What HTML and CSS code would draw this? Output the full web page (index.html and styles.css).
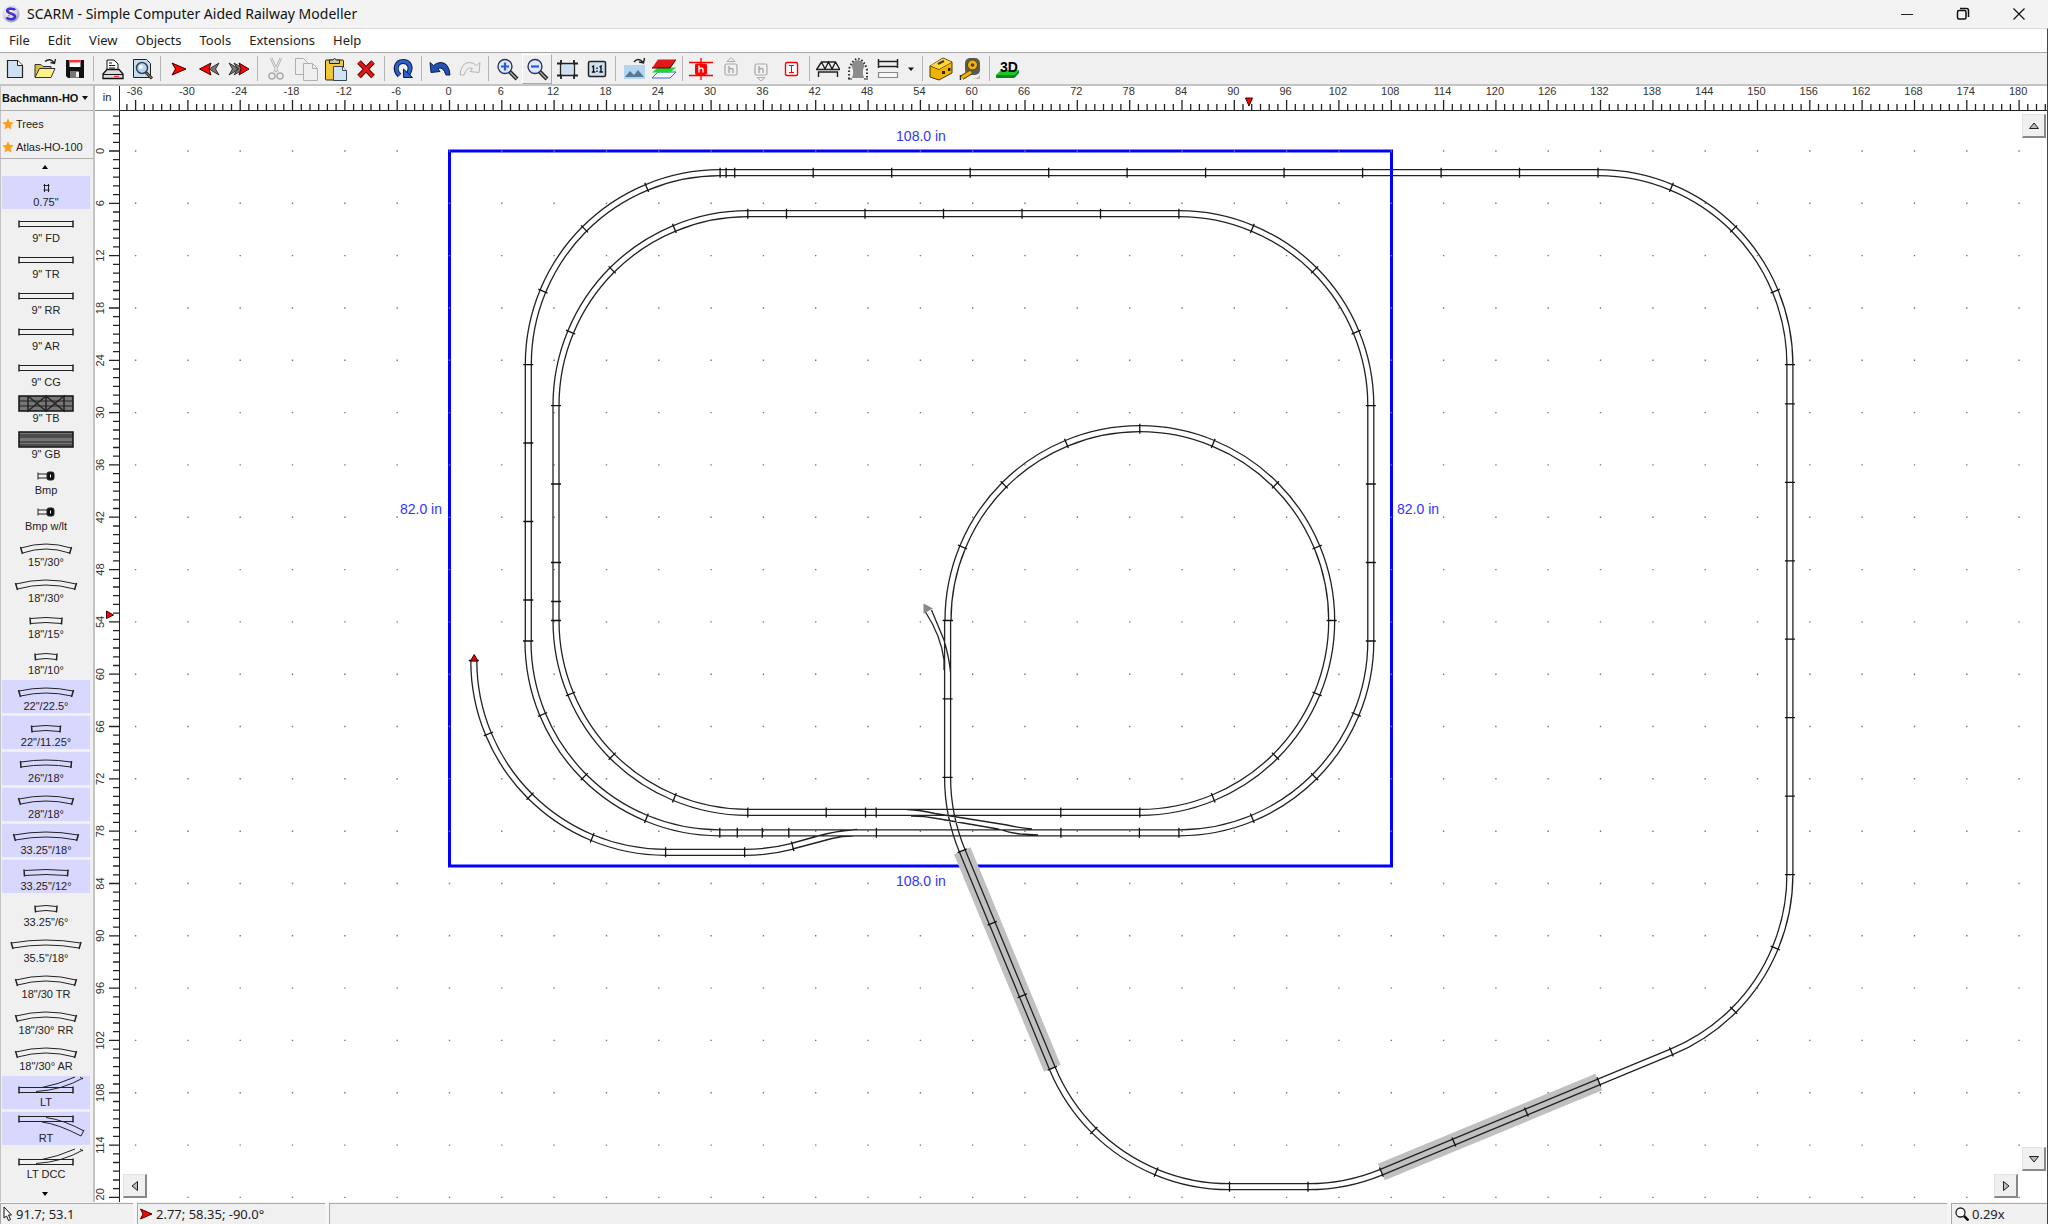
FILE: index.html
```html
<!DOCTYPE html>
<html lang="en">
<head>
<meta charset="utf-8">
<title>SCARM - Simple Computer Aided Railway Modeller</title>
<link rel="stylesheet" href="styles.css">
</head>
<body>
<header class="titlebar">
  <svg class="logo" width="18" height="18" viewBox="0 0 18 18"><defs><radialGradient id="ball" cx=".4" cy=".35" r=".7"><stop offset="0" stop-color="#fff"/><stop offset=".6" stop-color="#d5d5ea"/><stop offset="1" stop-color="#8f90ac"/></radialGradient></defs><circle cx="9" cy="9" r="8.5" fill="url(#ball)"/><path d="M13 5.2C12 3.4 6 2.8 5.2 5.6 4.600 9 13 7.800 13 11.600 12.800 15 6 15 4.800 12.300" fill="none" stroke="#3b32d8" stroke-width="2.600"/><path d="M8 7.500l3 1.300" stroke="#e03050" stroke-width="1"/><path d="M6 10.500l2 .5" stroke="#30c060" stroke-width="1"/></svg>
  <h1 class="title">SCARM - Simple Computer Aided Railway Modeller</h1>
  <div class="winbuttons">
    <button class="winbtn" aria-label="Minimize"><svg width="14" height="14"><path d="M1 7.500h12" stroke="#222" fill="none"/></svg></button>
    <button class="winbtn" aria-label="Restore"><svg width="14" height="14"><rect x="1.500" y="3.500" width="8.500" height="8.500" rx="1.500" fill="none" stroke="#111" stroke-width="1.500"/><path d="M4 1.500h6.500q2 0 2 2v6.500" fill="none" stroke="#111" stroke-width="1.500"/></svg></button>
    <button class="winbtn" aria-label="Close"><svg width="14" height="14"><path d="M1.500 1.500l11 11M12.500 1.500l-11 11" stroke="#111" stroke-width="1.200"/></svg></button>
  </div>
</header>
<div class="frame">
<nav class="menubar">
  <button>File</button><button>Edit</button><button>View</button><button>Objects</button><button>Tools</button><button>Extensions</button><button>Help</button>
</nav>
<div class="toolbar" role="toolbar">
  <button class="tool" aria-label="New"><svg viewBox="0 0 24 24"><path d="M4.500 3.500h10l5 5v12h-15z" fill="#cfe0f5" stroke="#222" stroke-width="1.200"/><path d="M14.500 3.500v5h5" fill="#fff" stroke="#222"/></svg></button>
  <button class="tool" aria-label="Open"><svg viewBox="0 0 24 24"><path d="M2 20V7.500h6l2 2h8v2" fill="#d8c22a" stroke="#333"/><path d="M2 20.500L6.500 11.500H22L18 20.500z" fill="#fbf08a" stroke="#333"/><path d="M12 4.500q5-4 9 1M22.500 2l-1 4.500-4-1" fill="none" stroke="#222" stroke-width="1.300"/></svg></button>
  <button class="tool" aria-label="Save"><svg viewBox="0 0 24 24"><path d="M3 3h18v18H5l-2-2z" fill="#111"/><path d="M6.500 3h11v7h-11z" fill="#fff"/><path d="M6.500 3h11v2.500h-11z" fill="#f33"/><path d="M7 14h9v7H7z" fill="#777"/><path d="M13 15h3v5h-3z" fill="#eee"/></svg></button>
  <span class="sep"></span>
  <button class="tool" aria-label="Print"><svg viewBox="0 0 24 24"><path d="M7 13V3h7l4 4v6" fill="#fff" stroke="#111"/><path d="M9 6h3M9 8.500h6M9 11h6" stroke="#111"/><path d="M3 17l4-4.500h12l4 4.500v4.500H3z" fill="#ddd" stroke="#111" stroke-width="1.300"/><path d="M3 17.500h20" stroke="#111"/><path d="M14 19.500h5" stroke="#e33" stroke-width="1.300"/></svg></button>
  <button class="tool" aria-label="Print preview"><svg viewBox="0 0 24 24"><path d="M3.500 2.500h13l4 4v14h-17z" fill="#cbdcf0" stroke="#222"/><circle cx="12" cy="11" r="5.500" fill="#b9d3f5" stroke="#345" stroke-width="1.500"/><circle cx="11" cy="10" r="2" fill="#fff"/><path d="M16 15.500l6 6" stroke="#222" stroke-width="3"/><path d="M16.500 16l5 5" stroke="#d8b040" stroke-width="1"/></svg></button>
  <span class="sep"></span>
  <button class="tool" aria-label="Start point"><svg viewBox="0 0 24 24"><path d="M5 6L19 12 5 18 8.500 12z" fill="#f00" stroke="#400"/></svg></button>
  <button class="tool" aria-label="Previous"><svg viewBox="0 0 24 24"><path d="M22 6L12 12 22 18 18.500 12z" fill="#777" stroke="#333"/><path d="M14 6L2.500 12 14 18 12 12z" fill="#f00" stroke="#400"/></svg></button>
  <button class="tool" aria-label="Next"><svg viewBox="0 0 24 24"><path d="M2 6l10 6-10 6 3.500-6zM7 6l10 6-10 6 3.500-6z" fill="#777" stroke="#333"/><path d="M12 6l10 6-10 6 2-6z" fill="#f00" stroke="#400"/></svg></button>
  <span class="sep"></span>
  <button class="tool" aria-label="Cut"><svg viewBox="0 0 24 24"><path d="M7 1l6.500 14M17 1l-6.500 14" fill="none" stroke="#aaa" stroke-width="2.500"/><path d="M7 1l6.500 14M17 1l-6.500 14" fill="none" stroke="#eee" stroke-width="1"/><circle cx="8" cy="19" r="3" fill="none" stroke="#aaa" stroke-width="1.500"/><circle cx="16" cy="19" r="3" fill="none" stroke="#aaa" stroke-width="1.500"/></svg></button>
  <button class="tool" aria-label="Copy"><svg viewBox="0 0 24 24"><path d="M1.500 1.500h8l4 4v12h-12z" fill="#efefef" stroke="#b0b0b0"/><path d="M9.500 6.500h9l5 5v12h-14z" fill="#efefef" stroke="#b0b0b0"/><path d="M18.500 6.500v5h5" fill="none" stroke="#b0b0b0"/></svg></button>
  <button class="tool" aria-label="Paste"><svg viewBox="0 0 24 24"><rect x="1.500" y="3" width="18" height="20" rx="1" fill="#f3c63c" stroke="#222"/><path d="M5.500 6.500V3h3q2-3 4 0h3v3.500z" fill="#c9c9a8" stroke="#222"/><path d="M9.500 9.500h9l4 4v10h-13z" fill="#d2e2f6" stroke="#345"/><path d="M18.500 9.500v4h4" fill="#fff" stroke="#345"/></svg></button>
  <button class="tool" aria-label="Delete"><svg viewBox="0 0 24 24"><path d="M5 5l14 14.500M19 5L5 19.500" stroke="#500" stroke-width="5"/><path d="M5 5l14 14.500M19 5L5 19.500" stroke="#e51616" stroke-width="3.200"/></svg></button>
  <span class="sep"></span>
  <button class="tool" aria-label="Rotate"><svg viewBox="0 0 24 24"><path d="M8.500 18.500C2 12 6 4.500 12 4.500S21.500 10 17 17" fill="none" stroke="#0a1c50" stroke-width="5"/><path d="M8.500 18C2.500 12 6 4.500 12 4.500S21.500 10 17 17" fill="none" stroke="#2d62c8" stroke-width="3"/><path d="M12.500 20.500V12l9 8.500z" fill="#2d62c8" stroke="#0a1c50"/></svg></button>
  <span class="sep"></span>
  <button class="tool" aria-label="Undo"><svg viewBox="0 0 24 24"><path d="M2 5.500L3 15.500 12 14.500 9.500 11.500Q15 9 18 18H22Q21 5 12 5.500 8 6 5.500 8.500z" fill="#2450b0" stroke="#0a1c50"/></svg></button>
  <button class="tool" aria-label="Redo"><svg viewBox="0 0 24 24"><path d="M22 5.500L21 15.500 12 14.500 14.500 11.500Q9 9 6 18H2Q3 5 12 5.500 16 6 18.500 8.500z" fill="#eee" stroke="#b5b5b5"/></svg></button>
  <span class="sep"></span>
  <button class="tool" aria-label="Zoom in"><svg viewBox="0 0 24 24"><path d="M14 14l8 8" stroke="#222" stroke-width="4"/><path d="M15 15l6.500 6.500" stroke="#aaa" stroke-width="1.500"/><circle cx="10" cy="9.500" r="7" fill="#dce9ff" stroke="#335" stroke-width="1.400"/><path d="M10 5.500v8M6 9.500h8" stroke="#2a5ad8" stroke-width="2.200"/></svg></button>
  <button class="tool raised" aria-label="Zoom out"><svg viewBox="0 0 24 24"><path d="M14 14l8 8" stroke="#222" stroke-width="4"/><path d="M15 15l6.500 6.500" stroke="#aaa" stroke-width="1.500"/><circle cx="10" cy="9.500" r="7" fill="#dce9ff" stroke="#335" stroke-width="1.400"/><path d="M6 9.500h8" stroke="#2a5ad8" stroke-width="2.200"/></svg></button>
  <button class="tool" aria-label="Fit"><svg viewBox="0 0 24 24"><path d="M5.500 6.500h14v12h-14z" fill="#cfdff2" stroke="#222" stroke-width="1.300"/><path d="M2 6.500h4V3M23 6.500h-4V3M2 18.500h4V22M23 18.500h-4V22" fill="none" stroke="#222" stroke-width="1.800"/></svg></button>
  <button class="tool" aria-label="Actual size"><svg viewBox="0 0 24 24"><rect x="3.500" y="4.500" width="17" height="15" rx="1.500" fill="#cfdff2" stroke="#222" stroke-width="1.500"/><path d="M7 10l1.500-1v6M6.800 15h3.600M14.500 10l1.500-1v6M14.300 15h3.600" fill="none" stroke="#111" stroke-width="1.400"/><path d="M12 10.500v1.400M12 13.500v1.400" stroke="#111" stroke-width="1.400"/></svg></button>
  <span class="sep"></span>
  <button class="tool" aria-label="Background image"><svg viewBox="0 0 24 24"><rect x="2" y="8" width="21" height="14" fill="#b6d4ee"/><path d="M3 20l5-6 4 4 4-5 6 7z" fill="#55799b"/><path d="M12 5q4-5 9 0M22.500 1l-1 5-4.500-1" fill="none" stroke="#222" stroke-width="1.400"/></svg></button>
  <button class="tool" aria-label="Layers"><svg viewBox="0 0 24 24"><path d="M0 21l6-6h18l-6 6z" fill="#f6f8ff" stroke="#4060d8"/><path d="M0 15.500l6-5h18l-6 5z" fill="#18d828"/><path d="M0 11L6 2.500h18L18 11z" fill="#e01818"/><path d="M0 11h18l6-8.500" fill="none" stroke="#500"/></svg></button>
  <span class="sep"></span>
  <button class="tool" aria-label="Set height"><svg viewBox="0 0 24 24"><path d="M0 5.500h24M0 18.500h24M12 1v22" stroke="#f00" stroke-width="1.300"/><rect x="6" y="6.500" width="12" height="11.500" rx="2" fill="#f00"/><path d="M10 8.500v7M10 12q4-2 4 .5v3" fill="none" stroke="#fff" stroke-width="1.400"/></svg></button>
  <button class="tool" aria-label="Raise"><svg viewBox="0 0 24 24"><path d="M8 4.500L12 .5l4 4z" fill="none" stroke="#aaa"/><rect x="6" y="7" width="12" height="11" rx="1.500" fill="none" stroke="#aaa" stroke-width="1.200"/><path d="M10 9v7M10 12q4-1.500 4 1v3" fill="none" stroke="#aaa" stroke-width="1.500"/></svg></button>
  <button class="tool" aria-label="Lower"><svg viewBox="0 0 24 24"><path d="M8 20.500l4 3.500 4-3.500z" fill="none" stroke="#aaa"/><rect x="6" y="7" width="12" height="11" rx="1.500" fill="none" stroke="#aaa" stroke-width="1.200"/><path d="M10 9v7M10 12q4-1.500 4 1v3" fill="none" stroke="#aaa" stroke-width="1.500"/></svg></button>
  <button class="tool" aria-label="Interpolate heights"><svg viewBox="0 0 24 24"><rect x="6.500" y="5.500" width="12" height="13" rx="1.500" fill="#fff" stroke="#f00" stroke-width="1.400"/><path d="M10 8.500h5M10 15.500h5M12.500 8.500v7" fill="none" stroke="#f00"/></svg></button>
  <span class="sep"></span>
  <button class="tool" aria-label="Bridge"><svg viewBox="0 0 24 24"><path d="M0 12.500h24M1 12L5.500 5h14L23.500 12M5.500 5l3.500 7 3.500-7 3.500 7 3.500-7M2.500 20v-5h19v5" fill="none" stroke="#222" stroke-width="1.400"/></svg></button>
  <button class="tool" aria-label="Tunnel"><svg viewBox="0 0 24 24"><path d="M6 21Q8.500 14 5.500 9q1-5 6.500-6 5.500 1 6.500 6-3 5-.5 12z" fill="#8c8c8c"/><path d="M3 22V12q3-9 9-10.500Q18 3 21 12v10" fill="none" stroke="#222" stroke-width="1.800" stroke-dasharray="1.500 2"/><path d="M2 22h4M18 22h4" stroke="#222"/></svg></button>
  <button class="tool" aria-label="Track style"><svg viewBox="0 0 24 24"><path d="M2.500 2v9M21.500 2v9M2 4.500h20M2 9.500h20" stroke="#222" stroke-width="1.500"/><path d="M2.500 15.500h19v5h-19z" fill="#f6f6f6" stroke="#888" stroke-width="1.200"/></svg></button>
  <button class="tool drop" aria-label="Track style options"><svg viewBox="0 0 8 24"><path d="M1 10.500h6l-3 3.500z" fill="#111"/></svg></button>
  <span class="sep"></span>
  <button class="tool" aria-label="Toolbox"><svg viewBox="0 0 24 24"><path d="M1 9L14 1l9 4v11L10 23 1 20z" fill="#f0b400" stroke="#4a3500"/><path d="M1 9l9 3.500L23 5" fill="none" stroke="#6a4a00"/><path d="M1.500 8.500L14 1.500l8.500 3.500L10 12z" fill="#ffd83c"/><path d="M9 7l6-3" stroke="#4a3500" stroke-width="2"/><path d="M13 14h3v3h-3zM19 11h2.500v3H19z" fill="#222"/></svg></button>
  <button class="tool" aria-label="Measure"><svg viewBox="0 0 24 24"><path d="M10 22q12 1 11-8v8z" fill="#bbb"/><rect x="6" y="1" width="15" height="17" rx="5" fill="#5a5a55"/><circle cx="13.500" cy="8" r="5" fill="#efb010" stroke="#5a4200"/><circle cx="13.500" cy="8" r="1.800" fill="#444"/><path d="M12 15L3 20.500" stroke="#6a5000" stroke-width="5"/><path d="M12 15L3 20.500" stroke="#f0b400" stroke-width="3"/><path d="M1.500 18v5" stroke="#333" stroke-width="1.500"/></svg></button>
  <span class="sep"></span>
  <button class="tool" aria-label="3D viewer"><svg viewBox="0 0 24 24"><path d="M0 18l5-5h18l-4.500 5z" fill="#18c828"/><path d="M0 18h18.500v3H0zM18.500 21l4.500-5v-3l-4.500 5z" fill="#0a8a14"/><text x="4" y="14.500" font-size="14" font-weight="bold" fill="#000">3D</text></svg></button>
</div>
<main class="work">
  <aside class="library">
    <div class="picker"><select class="lib" aria-label="Track library"><option>Bachmann-HO</option></select><svg class="caret" width="7" height="5"><path d="M0 0h6l-3 4z" fill="#111"/></svg></div>
    <div class="favs">
      <button class="fav"><svg width="12" height="12" viewBox="0 0 12 12"><path d="M6 .3l1.700 3.800 4 .5-3 2.700.8 4.200L6 9.400l-3.500 2.100.8-4.200-3-2.700 4-.5z" fill="#fb9f1c"/></svg>Trees</button>
      <button class="fav"><svg width="12" height="12" viewBox="0 0 12 12"><path d="M6 .3l1.700 3.800 4 .5-3 2.700.8 4.200L6 9.400l-3.500 2.100.8-4.200-3-2.700 4-.5z" fill="#fb9f1c"/></svg>Atlas-HO-100</button>
    </div>
    <button class="scroll" aria-label="Scroll up"><svg width="8" height="4"><path d="M1 4h6l-3-4z" fill="#000"/></svg></button>
    <div class="parts" id="parts"></div>
    <button class="scroll low" aria-label="Scroll down"><svg width="8" height="4"><path d="M1 0h6l-3 4z" fill="#000"/></svg></button>
  </aside>
  <section class="plan">
    <div class="unit">in</div>
    <div class="topruler"><svg id="topruler"></svg></div>
    <div class="leftruler"><svg id="leftruler"></svg></div>
    <div class="board">
      <svg id="board"></svg>
      <button class="pan up" aria-label="Pan up"><svg width="12" height="8"><path d="M1.500 6.500h9L6 1z" fill="#bbb" stroke="#222"/></svg></button>
      <button class="pan down" aria-label="Pan down"><svg width="12" height="8"><path d="M1.500 1.500h9L6 7z" fill="#bbb" stroke="#222"/></svg></button>
      <button class="pan left" aria-label="Pan left"><svg width="8" height="12"><path d="M6.500 1.500v9L1 6z" fill="#bbb" stroke="#222"/></svg></button>
      <button class="pan right" aria-label="Pan right"><svg width="8" height="12"><path d="M1.500 1.500v9L7 6z" fill="#bbb" stroke="#222"/></svg></button>
    </div>
  </section>
</main>
<footer class="status">
  <div class="cell pos"><svg width="12" height="16" viewBox="0 0 12 16"><path d="M2 1v11l2.500-2 2 4.500 2-1-2-4.500h3z" fill="#fff" stroke="#111"/></svg>91.7; 53.1</div>
  <div class="cell start"><svg width="14" height="12" viewBox="0 0 14 12"><path d="M1.500 1L13 6 1.500 11 4 6z" fill="#f00" stroke="#400"/></svg>2.77; 58.35; -90.0°</div>
  <div class="cell info"></div>
  <div class="cell zoom"><svg width="14" height="14" viewBox="0 0 14 14"><circle cx="5.500" cy="5.500" r="4.500" fill="#fff" stroke="#222" stroke-width="1.300"/><path d="M9 9l4.500 4.500" stroke="#111" stroke-width="2.500"/></svg>0.29x</div>
</footer>
</div>
<script src="plan.js"></script>
</body>
</html>
```
FILE: styles.css
```css
* { box-sizing: border-box; }
html { overflow: hidden; }
body { margin: 0; min-height: 100vh; display: flex; flex-direction: column; background: #f0f0f0; font-family: "Noto Sans", "Open Sans", sans-serif; font-size: 13px; color: #222; }
button { border: 0; margin: 0; padding: 0; background: none; font: inherit; color: inherit; }
svg { display: block; flex: none; }
svg text { font-family: "Liberation Sans", Arial, sans-serif; }

.titlebar { height: 28px; display: flex; align-items: center; background: #f3f3f3; padding-left: 2px; }
.title { margin: 0 0 0 7px; padding-bottom: 2px; flex: 1; font-size: 14px; font-weight: 400; color: #111; }
.winbuttons { display: flex; }
.winbtn { width: 56px; height: 28px; padding-right: 2px; display: flex; align-items: center; justify-content: center; }

.frame { flex: 1; display: flex; flex-direction: column; border-top: 1px solid #dcdcdc; box-shadow: inset 1px 0 #c4c4c4; border-right: 1px solid #444; }
.menubar { height: 24px; display: flex; align-items: center; background: #fff; border-bottom: 1px solid #a8a8a8; padding-bottom: 2px; }
.menubar button { padding: 0 9px; line-height: 20px; }
.toolbar { height: 33px; display: flex; align-items: center; background: #f0f0f0; border-bottom: 2px solid #c4c4c4; }
.tool { width: 30px; height: 30px; display: flex; align-items: center; justify-content: center; }
.tool svg { width: 24px; height: 24px; }
.tool.drop { width: 16px; }
.tool.drop svg { width: 8px; }
.tool.raised { border: 1px solid #fff; border-right-color: #aaa; border-bottom-color: #aaa; }
.sep { width: 1px; height: 25px; margin: 0 3px; background: #b4b4b4; }

.work { flex: 1; display: flex; }
.library { width: 95px; border-right: 2px solid #c4c4c4; display: flex; flex-direction: column; font-family: "Liberation Sans", Arial, sans-serif; font-size: 11px; color: #222; }
.picker { height: 25px; display: flex; align-items: center; border-bottom: 1px solid #b0b0b0; padding-left: 1px; }
.lib { appearance: none; border: 0; padding: 0; margin: 0; width: 80px; background: none; font: bold 11px "Liberation Sans", Arial, sans-serif; color: #111; padding-left: 1px; }
.caret { margin-left: 1px; }
.favs { height: 48px; border-bottom: 1px solid #b0b0b0; padding: 1px 0 0 2px; }
.fav { display: flex; align-items: center; gap: 2px; height: 23px; white-space: nowrap; }
.scroll { height: 17px; width: 90px; padding-bottom: 2px; display: flex; align-items: center; justify-content: center; }
.parts { display: flex; flex-direction: column; gap: 3px; width: 90px; padding-left: 2px; }
.part { height: 33px; display: flex; flex-direction: column; align-items: center; line-height: 14px; }
.part svg { width: 88px; height: 19px; overflow: visible; }
.part.on { background: #d8d8ff; }
.part span { position: relative; }
.low { height: 21px; padding: 5px 0 0; }

.plan { flex: 1; min-width: 0; display: grid; grid-template-columns: 25px 1fr; grid-template-rows: 25px 1fr; background: #fff; }
.unit { border-right: 1px solid #222; border-bottom: 1px solid #888; font: 11px/22px "Liberation Sans", Arial, sans-serif; text-align: center; }
.topruler, .leftruler, .board { position: relative; overflow: hidden; }
.topruler { border-bottom: 1px solid #222; }
.leftruler { border-right: 1px solid #222; }
#topruler, #leftruler, #board { position: absolute; left: 0; top: 0; width: 100%; height: 100%; }
.pan { position: absolute; width: 24px; height: 24px; background: #f0f0f0; border: 1px solid #e3e3e3; border-right: 2px solid #888; border-bottom: 2px solid #888; display: flex; align-items: center; justify-content: center; }
.up { top: 3px; right: 1px; }
.down { bottom: 31px; right: 1px; }
.left { left: 3px; bottom: 4px; }
.right { right: 29px; bottom: 4px; }

.status { height: 22px; display: flex; gap: 4px; background: #f6f6f6; }
.cell { height: 21px; margin-top: 1px; background: #f0f0f0; border-top: 1px solid #a8a8a8; border-left: 1px solid #a8a8a8; display: flex; align-items: center; gap: 2px; padding-left: 1px; }
.pos { width: 133px; }
.start { width: 188px; gap: 3px; }
.info { flex: 1; }
.zoom { width: 96px; padding-left: 3px; gap: 3px; }
```
FILE: plan.js
```js
const IN = 8.72, X0 = 449.5, Y0 = 151, R = 22 * IN, L = 9 * IN, D = Math.PI / 180;

// Part library thumbnails
const bars = (x1, x2, y, h) => `<path d="M${x1} ${y - h / 2}V${y + h / 2}M${x2} ${y - h / 2}V${y + h / 2}" stroke-width="1.5"/>`;
const straight = (y = 12, w = 54) => `<path d="M${44 - w / 2} ${y - 2.500}h${w}M${44 - w / 2} ${y + 2.500}h${w}"/>` + bars(44 - w / 2, 44 + w / 2, y, 7);
const curve = (w, s) => {
  const a = 44 - w / 2, b = 44 + w / 2, t = s > 2 ? 1.500 : 0, y = s > 1 ? 8 : 9.500;
  return `<path d="M${a} ${y + s}Q44 ${y - s} ${b} ${y + s}M${a + t} ${y + 5 + s}Q44 ${y + 5 - s} ${b - t} ${y + 5 + s}"/>` +
    `<path d="M${a - .5} ${y - 1 + s}L${a + t} ${y + 6 + s}M${b + .5} ${y - 1 + s}L${b - t} ${y + 6 + s}" stroke-width="1.500"/>`;
};
const bumper = () => '<path d="M36 10h9M36 14h9M36 8.500v7"/><rect x="45" y="8" width="7" height="8" rx="2" fill="#111"/><path d="M48.500 10.500v3" stroke="#fff"/>';
const bridge = x => `<rect x="17" y="4" width="54" height="15" fill="#777" stroke="#111" stroke-width="1.500"/><path d="M17 9h54M17 14h54"/>` +
  (x ? '<path d="M26 4v15l18-15v15L26 4M44 19L62 4v15L44 4" stroke-width="1.500"/>' : '<path d="M17 7h54M17 17h54"/>');
const left = () => straight(14) + '<path d="M40 11.500Q56 8.500 73 1M34 15.500Q60 14 81 2M78 1l3 2"/>';
const right = () => straight(7) + '<path d="M40 10Q56 12 79 24M44 5.500Q62 8 82 19M79 24l3-6"/>';

const parts = [
  ['0.75"', '<path d="M42.500 8v8M46.500 8v8M41.500 9.500h6M41.500 14h6"/>', 1],
  ['9" FD', straight()], ['9" TR', straight()], ['9" RR', straight()], ['9" AR', straight()], ['9" CG', straight()],
  ['9" TB', bridge(1)], ['9" GB', bridge(0)], ['Bmp', bumper()], ['Bmp w/lt', bumper()],
  ['15"/30°', curve(50, 4)], ['18"/30°', curve(60, 4)], ['18"/15°', curve(31, 1)], ['18"/10°', curve(21, 1)],
  ['22"/22.5°', curve(54, 3), 1], ['22"/11.25°', curve(28, 1), 1], ['26"/18°', curve(50, 2), 1], ['28"/18°', curve(54, 3), 1],
  ['33.25"/18°', curve(64, 3), 1], ['33.25"/12°', curve(43, 1), 1], ['33.25"/6°', curve(21, 1)], ['35.5"/18°', curve(69, 3)],
  ['18"/30 TR', curve(60, 4)], ['18"/30° RR', curve(60, 4)], ['18"/30° AR', curve(60, 4)],
  ['LT', left(), 1], ['RT', right(), 1], ['LT DCC', left()]
];
document.getElementById('parts').innerHTML = parts.map(([name, art, on]) =>
  `<button class="part${on ? ' on' : ''}"><svg fill="none" stroke="#222">${art}</svg><span>${name}</span></button>`).join('');

// Rulers, as long as the panes that show them
function rulers() {
  const top = document.getElementById('topruler'), side = document.getElementById('leftruler');
  const w = top.parentNode.clientWidth, h = side.parentNode.clientHeight;
  let ticks = '', labels = '';
  for (let i = -37; X0 + i * IN - 120 < w; i++) {
    const x = X0 + i * IN - 120, major = i % 6 === 0;
    ticks += `M${x.toFixed(1)} ${major ? 14 : 18}V25`;
    if (major && x < w - 12) labels += `<text x="${(x - 1).toFixed(1)}" y="9" text-anchor="middle">${i}</text>`;
  }
  top.innerHTML = `<path d="${ticks}" stroke="#222" stroke-width="1.300"/><g font-size="11" fill="#333">${labels}</g><path d="M1125.500 12h7l-3.500 8z" fill="#f00" stroke="#400"/>`;
  ticks = labels = '';
  for (let i = -4; Y0 + i * IN - 111 < h; i++) {
    const y = Y0 + i * IN - 111, major = i % 6 === 0;
    ticks += `M${major ? 14 : 18} ${y.toFixed(1)}H25`;
    // the last label keeps only the digits that fit above the pane's end
    const full = y < h - 8;
    if (major) labels += full
      ? `<text transform="translate(9 ${y.toFixed(1)}) rotate(-90)" text-anchor="middle">${i}</text>`
      : `<text transform="translate(9 ${(y + 3).toFixed(1)}) rotate(-90)">${String(i).slice(-2)}</text>`;
  }
  side.innerHTML = `<path d="${ticks}" stroke="#222" stroke-width="1.300"/><g font-size="11" fill="#333">${labels}</g><path d="M11.500 500v7.500l7-3.500z" fill="#f00" stroke="#400"/>`;
}
rulers();
addEventListener('resize', rulers);

// Track plan: every run is a list of centre-line pieces, drawn as two rails plus joints
let rails = '', joints = '', tunnels = '';
const p = n => n.toFixed(1);
function run(x, y, heading, pieces) {
  let a = heading * D;
  const joint = () => {
    const nx = -Math.sin(a) * 5, ny = Math.cos(a) * 5;
    joints += `M${p(x + nx)} ${p(y + ny)}L${p(x - nx)} ${p(y - ny)}`;
  };
  const side = (s, px, py, pa) => `${p(px - Math.sin(pa) * 3 * s)} ${p(py + Math.cos(pa) * 3 * s)}`;
  joint();
  for (const [kind, v, r = R] of pieces) {
    const ox = x, oy = y, oa = a;
    if (kind === 's' || kind === 't') {
      x += Math.cos(a) * v; y += Math.sin(a) * v;
      for (const s of [1, -1]) rails += `M${side(s, ox, oy, a)}L${side(s, x, y, a)}`;
      if (kind === 't') tunnels += `M${p(ox)} ${p(oy)}L${p(x)} ${p(y)}`;
    } else {
      const t = Math.sign(v), cx = x - Math.sin(a) * r * t, cy = y + Math.cos(a) * r * t;
      a += v * D;
      x = cx + Math.sin(a) * r * t; y = cy - Math.cos(a) * r * t;
      for (const s of [1, -1]) {
        const rr = p(r - 3 * s * t);
        rails += `M${side(s, ox, oy, oa)}A${rr} ${rr} 0 0 ${t > 0 ? 1 : 0} ${side(s, x, y, a)}`;
      }
    }
    joint();
  }
}
const S = n => Array(n).fill(['s', L]);
const T = n => Array(n).fill(['t', L]);
const C = (n, dir) => Array(n).fill(['c', 22.5 * dir]);

run(528.3, 641, -90, [['s', 41], ...S(3), ...C(4, 1), ['s', 6], ['s', 8.6], ...S(11), ...C(4, 1), ['s', L / 2], ...S(6),
  ...C(3, 1), ...S(1), ...T(3), ...C(1, 1), ...S(1), ...C(3, 1), ...T(3), ...C(1, 1), ...S(2)]);
run(528, 641, 90, [...C(4, -1), ['s', 17.5], ['s', 25], ['s', 26.5], ['s', 87.6], ['s', 184.5], ['s', 78.5], ['s', 39.5], ...C(4, -1), ...S(3), ...C(4, -1),
  ...S(4), ['s', 78.5], ['s', 38.7], ...C(4, -1), ...S(2), ['s', 39], ['s', 19], ...C(4, -1),
  ['s', 78.4], ['s', 39.3], ['s', 10.7], ['s', 184.6], ['s', 79], ...C(12, -1)]);
run(473.8, 660.5, 90, [...C(4, -1), ['s', 79], ['c', -14.5]]);

// Turnout legs
const legs = 'M907 809.500Q920 810 935 813.500L1007 825Q1020 828 1032 829M911 816Q925 816 937 818.500L998 829Q1010 833 1020 834L1038 835' +
  'M925.500 612Q941 636 944 660V670M931.500 610L944 640Q949 657 950.500 672' +
  'M791 843.500L818 836Q835 831 857 829.500M792.500 849L832 838.500Q842 836 853 836';

let dots = '';
for (let i = -6; i < 60; i++) for (let j = 0; j < 40; j++) dots += `M${p(X0 + i * 6 * IN - .7)} ${p(Y0 + j * 6 * IN)}h1.400`;

document.getElementById('board').innerHTML = `<g transform="translate(-120 -111)" fill="none">
<rect x="449.500" y="151" width="942" height="715" stroke="#00f" stroke-width="3"/>
<g fill="#33f" font-size="14" stroke="none"><text x="921" y="141" text-anchor="middle">108.0 in</text><text x="921" y="886" text-anchor="middle">108.0 in</text><text x="442" y="514" text-anchor="end">82.0 in</text><text x="1397" y="514">82.0 in</text></g>
<path d="${dots}" stroke="#777" stroke-width="1.400"/>
<path d="${tunnels}" stroke="#c0c0c0" stroke-width="18"/>
<path d="${rails}${legs}" stroke="#222" stroke-width="1.300"/>
<path d="${joints}" stroke="#111" stroke-width="1.300"/>
<path d="M923.500 603.500v10l9.500-5z" fill="#888"/>
<path d="M470.500 661h7.500l-3.800-6.500z" fill="#e00" stroke="#300"/></g>`;
```
